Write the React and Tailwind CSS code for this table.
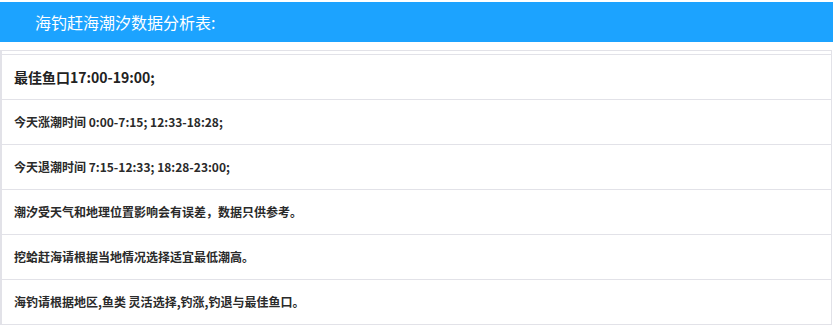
import React from 'react';

const rows = [
    { text: '今天涨潮时间 0:00-7:15; 12:33-18:28;' },
    { text: '今天退潮时间 7:15-12:33; 18:28-23:00;' },
    { text: '潮汐受天气和地理位置影响会有误差，数据只供参考。' },
    { text: '挖蛤赶海请根据当地情况选择适宜最低潮高。' },
    { text: '海钓请根据地区,鱼类 灵活选择,钓涨,钓退与最佳鱼口。' }
];

const font = { fontFamily: '"Noto Sans CJK SC", "Liberation Sans", sans-serif' };

export default function App() {
    return (
        <div className="w-[833px] bg-white pt-[2px]" style={font}>
            <div className="h-[40px] bg-[#1ca3ff] pl-[35px] flex items-center text-white text-[16px]">
                海钓赶海潮汐数据分析表:
            </div>

            <div className="mt-[8px] mr-[1px] border border-l-2 border-[#e2e2e8] pt-[3px]">
                <div className="h-[45px] border-t border-[#e2e2e8] flex items-center pl-[12px] text-[14px] font-bold text-[#222]">
                    最佳鱼口17:00-19:00;
                </div>
                {rows.map((r, i) => (
                    <div
                        key={i}
                        className="h-[45px] border-t border-[#e2e2e8] flex items-center pl-[12px] text-[12px] font-semibold text-[#2a2a2a]"
                    >
                        {r.text}
                    </div>
                ))}
            </div>
        </div>
    );
}
